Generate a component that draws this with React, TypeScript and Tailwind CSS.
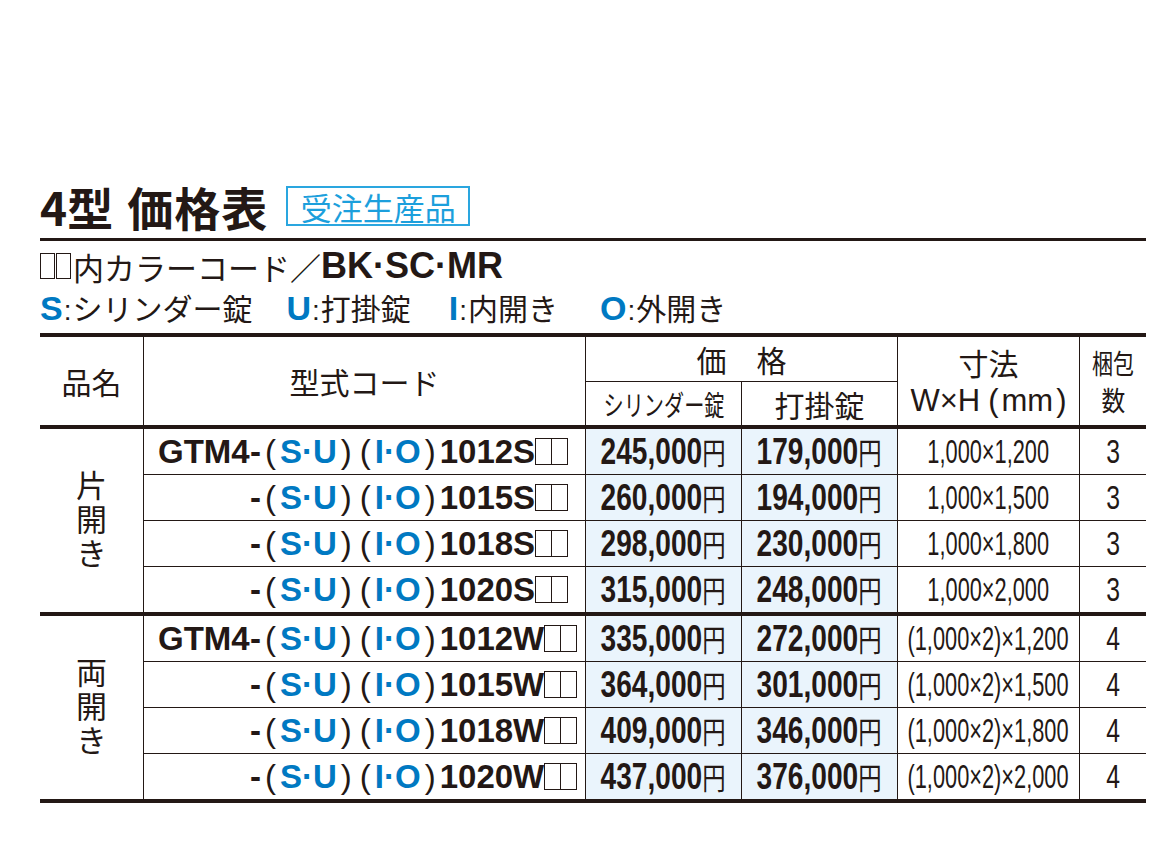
type PriceRow = {
  code: string;
  cyl: string;
  hook: string;
  size: string;
  qty: string;
};

type Group = {
  label: string;
  rows: PriceRow[];
};

const groups: Group[] = [
  {
    label: "片開き",
    rows: [
      { code: "1012S", cyl: "245,000", hook: "179,000", size: "1,000×1,200", qty: "3" },
      { code: "1015S", cyl: "260,000", hook: "194,000", size: "1,000×1,500", qty: "3" },
      { code: "1018S", cyl: "298,000", hook: "230,000", size: "1,000×1,800", qty: "3" },
      { code: "1020S", cyl: "315,000", hook: "248,000", size: "1,000×2,000", qty: "3" },
    ],
  },
  {
    label: "両開き",
    rows: [
      { code: "1012W", cyl: "335,000", hook: "272,000", size: "(1,000×2)×1,200", qty: "4" },
      { code: "1015W", cyl: "364,000", hook: "301,000", size: "(1,000×2)×1,500", qty: "4" },
      { code: "1018W", cyl: "409,000", hook: "346,000", size: "(1,000×2)×1,800", qty: "4" },
      { code: "1020W", cyl: "437,000", hook: "376,000", size: "(1,000×2)×2,000", qty: "4" },
    ],
  },
];

const Blank = ({ className }: { className: string }) => (
  <span className={`inline-block border border-[#231815] ${className}`} />
);

const Paren = ({ children }: { children: string }) => (
  <span className="px-[4px] font-normal text-[#231815]">{children}</span>
);

// price with a squeezed numeral face, as in the printed catalogue
const Yen = ({ value }: { value: string }) => (
  <div className="shrink-0 flex items-baseline whitespace-nowrap scale-x-[0.78]">
    <span className="font-['Liberation_Sans',sans-serif] text-[36px] font-bold">{value}</span>
    <span className="font-['Noto_Sans_CJK_JP',sans-serif] text-[30px]">円</span>
  </div>
);

const CodeCell = ({ code, first }: { code: string; first: boolean }) => (
  <div className="w-[442px] h-full border-r border-[#231815] flex items-center pl-[14px] font-['Liberation_Sans','Noto_Sans_CJK_JP',sans-serif] text-[33px] font-bold leading-none">
    <span className="w-[92px]">{first ? "GTM4" : ""}</span>
    <span>-</span>
    <Paren>(</Paren>
    <span className="text-[#0079c2]">S·U</span>
    <Paren>)</Paren>
    <Paren>(</Paren>
    <span className="text-[#0079c2]">I·O</span>
    <Paren>)</Paren>
    <span>{code}</span>
    <span className="flex">
      <Blank className="w-[17px] h-[27px]" />
      <Blank className="w-[17px] h-[27px] -ml-px" />
    </span>
  </div>
);

const Legend = ({ k, text, className }: { k: string; text: string; className?: string }) => (
  <span className={`flex items-baseline ${className ?? ""}`}>
    <span className="font-['Liberation_Sans',sans-serif] font-bold text-[34px] text-[#0079c2]">{k}</span>
    <span className="font-['Liberation_Sans',sans-serif] text-[28px] px-[1px]">:</span>
    <span>{text}</span>
  </span>
);

export default function App() {
  return (
    <div className="w-[1166px] h-[842px] bg-white pt-[180px] pl-[40px] text-[#231815] font-['Noto_Sans_CJK_JP',sans-serif]">
      <div className="w-[1106px]">
        <div className="flex items-center h-[52px]">
          <h1 className="flex text-[46px] font-bold leading-none">
            <span>4型</span>
            <span className="ml-[14px] tracking-[1px]">価格表</span>
          </h1>
          <div className="ml-[18px] w-[184px] h-[40px] border-2 border-[#2aa6df] flex items-center justify-center text-[31px] leading-none text-[#1c9fdc]">
            受注生産品
          </div>
        </div>
        <div className="mt-[6px] h-[3px] bg-[#231815]" />

        <div className="h-[50px] flex items-center text-[31px] leading-none">
          <span className="flex items-center mr-[2px]">
            <Blank className="w-[15px] h-[26px]" />
            <Blank className="w-[15px] h-[26px] ml-[1px]" />
          </span>
          <span>内カラーコード／</span>
          <span className="font-['Liberation_Sans',sans-serif] font-bold text-[36px]">BK·SC·MR</span>
        </div>
        <div className="h-[34px] flex items-center text-[30px] leading-none">
          <Legend k="S" text="シリンダー錠" />
          <Legend k="U" text="打掛錠" className="ml-[34px]" />
          <Legend k="I" text="内開き" className="ml-[38px]" />
          <Legend k="O" text="外開き" className="ml-[42px]" />
        </div>

        <div className="mt-[8px] border-t-4 border-b-4 border-[#231815]">
          <div className="flex h-[92px] border-b-4 border-[#231815] text-[30px] leading-none">
            <div className="w-[104px] border-r border-[#231815] flex items-center justify-center">品名</div>
            <div className="w-[442px] border-r border-[#231815] flex items-center justify-center">型式コード</div>
            <div className="w-[312px] border-r border-[#231815] flex flex-col">
              <div className="h-[45px] border-b border-[#231815] flex items-center justify-center">価　格</div>
              <div className="flex-1 flex">
                <div className="w-[156px] border-r border-[#231815] flex items-center justify-center">
                  <span className="inline-block scale-x-[0.72] text-[28px] whitespace-nowrap">シリンダー錠</span>
                </div>
                <div className="flex-1 flex items-center justify-center">打掛錠</div>
              </div>
            </div>
            <div className="w-[182px] border-r border-[#231815] flex flex-col items-center justify-center gap-[8px]">
              <span>寸法</span>
              <span className="font-['Liberation_Sans',sans-serif] text-[31px] flex items-baseline">
                W×H<span className="ml-[8px] mr-[3px]">(</span>mm<span className="ml-[3px]">)</span>
              </span>
            </div>
            <div className="flex-1 flex flex-col items-center justify-center gap-[10px] text-[27px]">
              <span className="inline-block scale-x-[0.78] whitespace-nowrap">梱包</span>
              <span className="inline-block scale-x-[0.88]">数</span>
            </div>
          </div>

          {groups.map((g, gi) => (
            <div key={g.label} className={`flex ${gi === 0 ? "border-b-4 border-[#231815]" : ""}`}>
              <div className="w-[104px] border-r border-[#231815] flex items-center justify-center">
                <span className="[writing-mode:vertical-rl] text-[31px] leading-none tracking-[3px]">{g.label}</span>
              </div>
              <div className="flex-1">
                {g.rows.map((r, ri) => (
                  <div
                    key={r.code}
                    className={`flex ${ri < 3 ? "h-[46px] border-b border-[#231815]" : "h-[45px]"}`}
                  >
                    <CodeCell code={r.code} first={ri === 0} />
                    <div className="w-[156px] border-r border-[#231815] bg-[#eaf4fc] flex items-center justify-center">
                      <Yen value={r.cyl} />
                    </div>
                    <div className="w-[156px] border-r border-[#231815] bg-[#eaf4fc] flex items-center justify-center">
                      <Yen value={r.hook} />
                    </div>
                    <div className="w-[182px] border-r border-[#231815] flex items-center justify-center">
                      <span className="shrink-0 whitespace-nowrap scale-x-[0.66] font-['Liberation_Sans',sans-serif] text-[33px]">
                        {r.size}
                      </span>
                    </div>
                    <div className="flex-1 flex items-center justify-center">
                      <span className="scale-x-[0.75] font-['Liberation_Sans',sans-serif] text-[33px]">{r.qty}</span>
                    </div>
                  </div>
                ))}
              </div>
            </div>
          ))}
        </div>
      </div>
    </div>
  );
}
